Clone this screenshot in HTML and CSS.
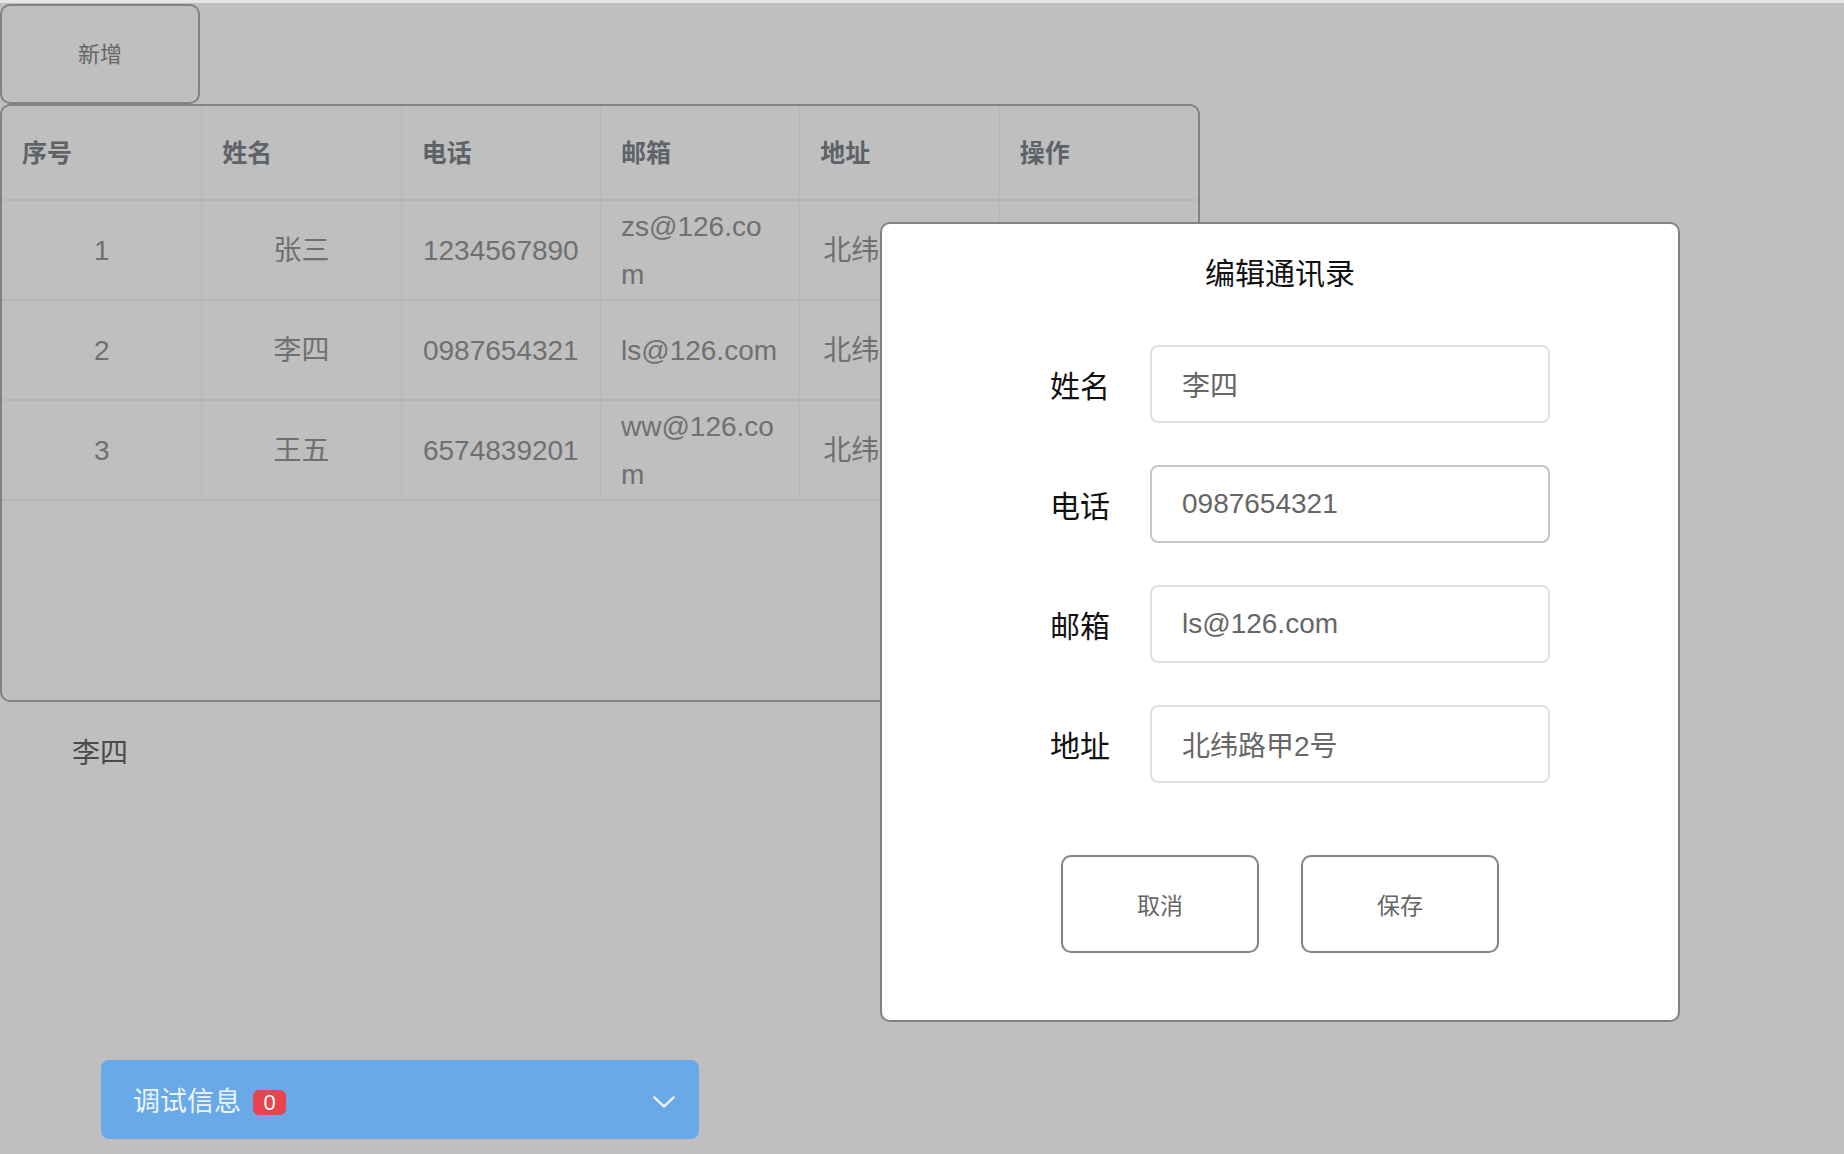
FILE: index.html
```html
<!DOCTYPE html>
<html lang="zh-CN">
<head>
    <meta charset="UTF-8">
    <meta name="viewport" content="width=device-width, initial-scale=1.0">
    <title>通讯录</title>
    <link rel="stylesheet" href="styles.css">
</head>
<body>
    <div class="topline"></div>
    <div class="page">
        <button class="btn-add">新增</button>

        <div class="table">
            <div class="tr th">
                <div class="cell">序号</div>
                <div class="cell">姓名</div>
                <div class="cell">电话</div>
                <div class="cell">邮箱</div>
                <div class="cell">地址</div>
                <div class="cell">操作</div>
            </div>
            <div class="tr">
                <div class="cell center">1</div>
                <div class="cell center">张三</div>
                <div class="cell center">1234567890</div>
                <div class="cell">zs@126.com</div>
                <div class="cell nowrap">北纬路甲1号</div>
                <div class="cell"></div>
            </div>
            <div class="tr">
                <div class="cell center">2</div>
                <div class="cell center">李四</div>
                <div class="cell center">0987654321</div>
                <div class="cell">ls@126.com</div>
                <div class="cell nowrap">北纬路甲2号</div>
                <div class="cell"></div>
            </div>
            <div class="tr">
                <div class="cell center">3</div>
                <div class="cell center">王五</div>
                <div class="cell center">6574839201</div>
                <div class="cell">ww@126.com</div>
                <div class="cell nowrap">北纬路甲3号</div>
                <div class="cell"></div>
            </div>
        </div>

        <div class="current">李四</div>
    </div>

    <!-- 编辑弹窗 -->
    <div class="modal">
        <div class="modal-title">编辑通讯录</div>
        <div class="form">
            <div class="form-row">
                <span class="form-label">姓名</span>
                <input class="form-input" type="text" value="李四">
            </div>
            <div class="form-row">
                <span class="form-label">电话</span>
                <input class="form-input active" type="text" value="0987654321">
            </div>
            <div class="form-row">
                <span class="form-label">邮箱</span>
                <input class="form-input" type="text" value="ls@126.com">
            </div>
            <div class="form-row">
                <span class="form-label">地址</span>
                <input class="form-input" type="text" value="北纬路甲2号">
            </div>
        </div>
        <div class="actions">
            <button class="modal-btn">取消</button>
            <button class="modal-btn">保存</button>
        </div>
    </div>

    <!-- 调试面板 -->
    <div class="debug">
        <span class="debug-title">调试信息</span>
        <span class="badge">0</span>
        <svg class="chevron" viewBox="0 0 22 12" fill="none" stroke="#f4f7fb" stroke-width="2.4" stroke-linecap="round" stroke-linejoin="round">
            <polyline points="1.5,1.5 11,10.5 20.5,1.5"></polyline>
        </svg>
    </div>
</body>
</html>
```

FILE: styles.css
```css
body {
    margin: 0;
    width: 1844px;
    height: 1154px;
    overflow: hidden;
    position: relative;
    background-color: #bfbfbf;
    font-family: "Liberation Sans", "Noto Sans CJK SC", sans-serif;
}
.topline {
    height: 3px;
    background-color: #e4e4e4;
}
.page {
    padding-top: 1px;
}
.btn-add {
    display: block;
    width: 200px;
    height: 100px;
    margin: 0;
    padding: 0 0 4px;
    background: transparent;
    border: 2px solid #828282;
    border-radius: 10px;
    font-family: inherit;
    font-size: 22px;
    color: #666;
}
.table {
    width: 1200px;
    height: 598px;
    box-sizing: border-box;
    border: 2px solid #828282;
    border-radius: 10px;
}
.tr {
    display: grid;
    grid-template-columns: repeat(6, 1fr);
    height: 100px;
    box-sizing: border-box;
    border-bottom: 2px solid #b3b6bb;
}
.tr.th {
    height: 95px;
}
.cell {
    display: flex;
    align-items: center;
    padding: 2px 20px 0;
    border-left: 1px solid #b3b6bb;
    font-size: 28px;
    line-height: 1.7;
    color: #707070;
    word-break: break-all;
    overflow: hidden;
}
.cell:first-child {
    border-left: none;
}
.cell.center {
    justify-content: center;
    text-align: center;
}
.cell.nowrap {
    padding-left: 23px;
    white-space: nowrap;
}
.th .cell {
    font-size: 25px;
    font-weight: bold;
    color: #5f6368;
}
.current {
    width: 200px;
    height: 104px;
    line-height: 104px;
    text-align: center;
    font-size: 28px;
    color: #4a4a4a;
}
.modal {
    position: absolute;
    left: 880px;
    top: 222px;
    width: 800px;
    height: 800px;
    box-sizing: border-box;
    padding-top: 30px;
    background-color: #fff;
    border: 2px solid #828282;
    border-radius: 10px;
}
.modal-title {
    text-align: center;
    font-size: 30px;
    line-height: 40px;
    color: #111;
}
.form {
    display: flex;
    flex-direction: column;
    gap: 42px;
    margin-top: 51px;
}
.form-row {
    display: flex;
    align-items: center;
    height: 78px;
}
.form-label {
    width: 60px;
    margin-left: 168px;
    margin-right: 40px;
    font-size: 30px;
    color: #111;
    white-space: nowrap;
}
.form-input {
    width: 400px;
    height: 78px;
    box-sizing: border-box;
    padding: 0 30px;
    border: 2px solid #dcdfe6;
    border-radius: 8px;
    font-family: inherit;
    font-size: 28px;
    color: #666;
    outline: none;
}
.form-input.active {
    border-color: #c3c6cd;
}
.actions {
    display: flex;
    justify-content: center;
    gap: 42px;
    margin-top: 72px;
}
.modal-btn {
    width: 198px;
    height: 98px;
    padding: 0;
    background-color: #fff;
    border: 2px solid #828282;
    border-radius: 10px;
    font-family: inherit;
    font-size: 23px;
    color: #666;
}
.debug {
    position: absolute;
    left: 101px;
    top: 1060px;
    width: 598px;
    height: 79px;
    box-sizing: border-box;
    padding: 0 24px 0 32px;
    display: flex;
    align-items: center;
    background-color: #69a9e8;
    border-radius: 8px;
    color: #eef3f9;
}
.debug-title {
    font-size: 27px;
}
.badge {
    margin-left: 12px;
    margin-top: 5px;
    min-width: 33px;
    height: 25px;
    line-height: 25px;
    border-radius: 6px;
    background-color: #e8434f;
    color: #fff;
    font-size: 22px;
    text-align: center;
}
.chevron {
    margin-left: auto;
    margin-top: 4px;
    width: 22px;
    height: 12px;
}
```
